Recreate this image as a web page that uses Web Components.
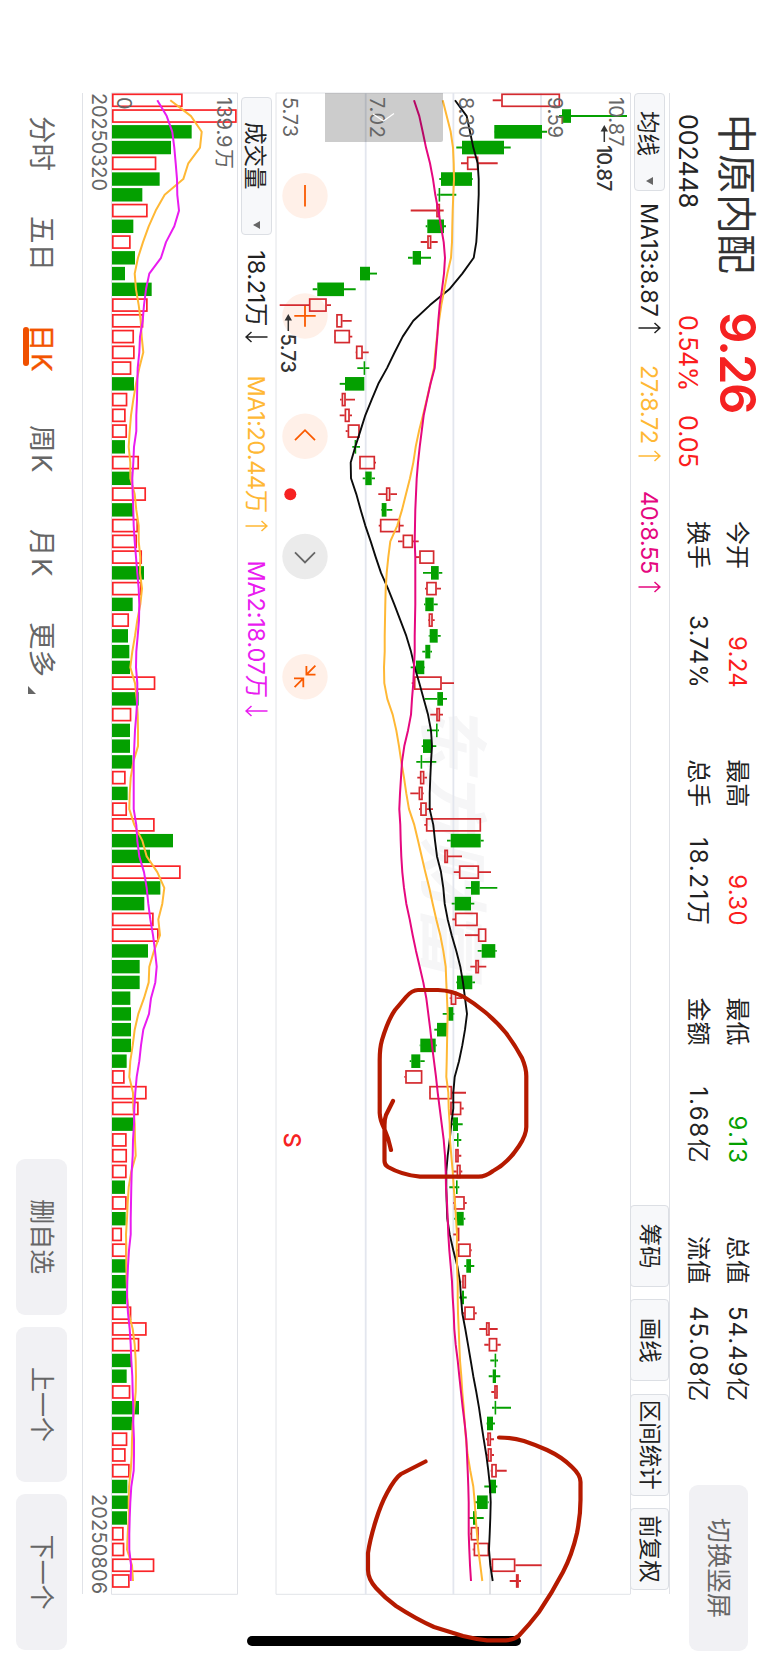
<!DOCTYPE html>
<html lang="zh-CN">
<head>
<meta charset="UTF-8">
<title>中原内配 002448</title>
<style>
    html, body { margin: 0; padding: 0; background: #fff; }
    body { width: 768px; height: 1663px; overflow: hidden; position: relative; }
</style>
</head>
<body>
<kline-screen></kline-screen>
<ink-marks></ink-marks>

<script>
const SCREEN_H = 768;
const FIRST_X = 100.3;
const STEP = 15.752;
const RED = "#d42a2f";
const GREEN = "#04a000";

// color, low, body start, body end, high (levels in px above the screen's lower edge)
const CANDLES = `
r 492.7 501.3 560 560|g 559 562 571 627|g 494 494.3 542 547|g 456.3 462 504 510.7|r 461 467 478.3 497.7
g 439.3 441 472 472.7|g 437.3 438.6 440.2 456.3|r 410.7 436.3 440 443.7|g 425.7 427.3 444 446|r 420.7 427.3 431.3 437.7
g 408 412.7 421 431|g 360 360 370 377|g 312.7 317.3 344 355.7|r 279.7 309 326.7 331|r 336 336.3 342.3 351.7
r 334 334.3 350 352.3|r 355.7 356 362.7 368.7|g 357.3 363.6 365.2 369.3|g 339.7 345 364.3 364.3|r 340 341.7 345.7 355
r 339.7 344.7 349.7 352|r 345.7 347.7 359.7 359.7|g 352.3 354.6 356.2 360|r 359 359.3 375 376|g 362.7 365.3 371.7 375
r 378.3 386 390.3 397|g 381 381.7 386.5 392.3|r 378.7 380 400 403.7|r 398 402.7 413 418.7|r 415.7 419.3 434.3 434.3
g 423 431 438.7 442.3|r 425 426.3 436.7 441|g 424 425.3 433.7 437.7|r 428 428.7 432.7 434.7|g 428.7 429.7 437.7 440.7
g 422.3 425.3 430.3 432|g 410.7 416 424.3 425|r 411.7 414 441.7 454|g 424.7 437.3 443 447|r 430.3 436.3 440 443
g 427 436 437.6 439|g 421.7 423 431.7 436.3|g 416.3 420.6 422.2 436.3|r 417.3 420 424.3 427|r 410.3 418.7 422.7 423.7
r 419 420.3 426.7 433|r 424.3 426 481 481|g 447 450.7 480.7 483.7|r 444 444.3 448 462|r 453.7 459 479 491
g 465.7 471 479.7 497.3|g 451.7 454.7 471 474.3|r 452.3 455 477.7 477.7|r 465 478 486.3 486.3|g 477.7 481.7 495.3 496.7
r 470.3 475.3 479 486.3|g 456.3 457 472.3 475|r 449.7 450.7 456.3 462.3|g 442.7 448.3 453.3 454.3|g 434.3 437 447 447
g 419.7 420.3 435.7 436.7|g 409.7 411.3 420.3 424.7|r 404.3 405.3 422.3 422.3|r 429 429.3 452 466|r 450 450.3 461.3 463.7
g 451 453 458 462.7|g 454 457 458.6 461.3|r 455 455.3 458.7 461.3|r 452.3 456.7 460.7 462.3|g 449.3 456 457.6 459.3
r 453.3 454 464.7 466.7|g 454.3 456.3 463.7 465.3|r 453.3 456.3 459.3 459.3|r 456 458 470.7 471.7|g 464.3 466.3 471 474.3
r 461.7 462.3 466 466|g 459.3 462 464 466.7|r 463 464.3 474.7 476.7|r 479.3 486 489.7 497.7|r 484.3 488.7 497.3 500.7
g 490.3 494.6 496.2 498|g 488.7 492.7 496 500.3|r 491.3 494.3 497.7 498|g 492 494.6 496.2 511|g 486.6 487 493 495
r 486 487.3 491 494|r 487 487.7 491.7 494|r 490.7 491.3 496.7 506.7|g 484.3 489 496 497.3|g 474.7 477 487.7 488.7
g 468.3 473 476.3 483.7|r 470 470.7 478.7 479|r 472.7 473.7 489 489|r 491.7 491.7 515.3 541.7|r 509.7 516 518.7 521`
    .trim().split(/[|\n]/).map(row => {
        const [color, ...levels] = row.split(" ");
        return { color, levels: levels.map(Number) };
    });

const MA13 = [455,466.7,470,473.3,477.7,478.7,478.7,478,477.3,476.3,473.7,462.3,449.3,430,413.3,402.7,394.7,387,378.3,371.7,365.3,360.3,355.3,350.7,351,356.3,360.7,365.3,370.7,375.7,381,388,394.3,400.3,406.3,411,414.7,419.3,423.7,428,431,432,431,430.3,429.7,429.7,433.3,435,437,441,443.3,444.7,447.7,451.7,456.3,460.3,463,465,467,465,462.3,459,454.7,453.3,453.3,451.3,449.7,447.7,446.3,446.3,446.7,447.3,449.7,453.3,457.3,460,461,462.3,465.3,468,470.7,473.3,476.3,479,481.3,483.7,486.3,488.3,490,490.7,490.3,489.7,489,490.3,492.7];
const MA27 = [442.7,446.7,450.7,453,453.7,454,453.3,452.7,452.3,452,451,447.3,444.3,441.3,439,437,435.3,434,430.3,426.7,423,419,415.7,413.3,410,406,402,397.3,390.3,388.3,386.7,385.7,385.3,385,384.7,384.7,384,384.3,387.3,392.7,396.3,399,401.3,404,406.3,409,414.3,418,421.7,425.3,429.3,432.7,436.3,440.3,443.3,445.7,446.3,447,447.7,447.3,447,446.7,446.3,448.3,448.7,449.7,450,451.3,452.7,453.7,455,456,457,456.7,457,457.7,457.7,458,458.7,459.3,460,461.3,462.3,463.7,464.7,466,467.7,470.3,473.3,474.7,475.7,477,478.3,480.3,482.3];
const MA40 = [414,419.3,422.7,426,430,433,435.3,438.3,441,443.7,445,444,442,439.7,438.3,437.3,436,434.7,430.5,427,423.7,421.7,419.7,418,416.7,416,415.3,415,414.7,415.3,415.3,415.3,415.3,415,414.7,414.7,414,413.3,412,411,408,404.3,402,401,400,399.3,400.3,400.7,401.3,402.3,404,406.3,409.7,412.7,416,419.7,423.3,426.3,428.3,430.3,432,434,436,437.7,439.7,441.7,443.7,445,445.7,446,447,447.7,448.3,449.3,450.7,452,452.7,453.7,454.3,455.7,457.7,459.3,461,462.7,464.7,466.3,467,467.7,468.3,468.7,468.7,468.7,469.3,470,471];

// Volume levels are kept at three units per px
const VOLUME = [548,710,575,513,469,479,427,443,400,392,405,375,455,443,430,402,404,394,402,382,377,381,375,417,394,438,402,414,411,426,432,425,398,387,384,388,390,466,416,394,390,390,397,377,383,381,464,519,450,542,481,433,461,476,444,419,419,391,393,393,393,380,374,440,416,400,380,381,380,375,380,377,366,381,379,380,378,394,440,418,394,380,391,417,398,382,377,389,382,384,381,371,373,463,389];
const VOLUME_COLORS = "rrggrggrgrgggrrrrrgrrrgrgrgrrrgrgrgggrgrgggrgrrggrggrrgggggggg" + "rrrgrrrgrgrrgggrrrggrggrrrgggrrrr";
const VOL_MA1 = [511,573,605,600,565,550,494,467,446,429,414,404,408,416,422,425,430,418,408,400,393,389,386,391,391,404,409,416,416,421,420,426,421,412,405,397,391,405,410,413,414,414,400,392,389,388,403,427,440,472,493,487,475,480,462,448,446,432,415,404,398,391,388,399,400,404,405,407,394,386,383,381,378,379,379,380,382,386,398,404,407,408,407,403,398,396,395,392,387,386,386,383,381,396,399];
const VOL_MA2 = [472,500,517,523,527,531,532,537,523,498,483,448,438,432,428,420,418,413,412,411,409,409,402,400,397,398,400,401,404,408,412,416,418,417,413,409,408,412,412,409,405,403,401,401,401,401,409,412,418,432,440,445,451,459,465,470,466,453,447,430,423,418,410,406,403,402,399,398,395,394,393,392,392,387,384,382,381,384,389,392,394,397,398,400,400,402,402,401,394,391,389,388,388,393,392];

const xAt = i => FIRST_X + STEP * i;
const polyline = (values, color, width, scale = 1) =>
    `<polyline fill="none" stroke="${color}" stroke-width="${width}" stroke-linejoin="round" points="${values.map((v, i) => `${xAt(i).toFixed(1)},${(SCREEN_H - v / scale).toFixed(1)}`).join(" ")}"/>`;

// Text that spreads its letters to fill a given width
class FitText extends HTMLElement {
    constructor() {
        super();
        this.attachShadow({ mode: "open" });
        this.shadowRoot.innerHTML = `
            <style>
                :host { display: inline-block; white-space: nowrap; line-height: 1.2; }
                span { display: inline-block; }
            </style>
            <span><slot></slot></span>
        `;
    }

    connectedCallback() {
        const width = Number(this.getAttribute("w"));
        if (!width) return;
        const span = this.shadowRoot.querySelector("span");
        const count = [...this.textContent].length;
        const gap = (width - span.offsetWidth) / count;
        span.style.letterSpacing = gap.toFixed(2) + "px";
        this.style.width = width + "px";
    }
}

// Thin trend arrow after an indicator value
class TrendArrow extends HTMLElement {
    constructor() {
        super();
        this.attachShadow({ mode: "open" });
        this.shadowRoot.innerHTML = `
            <style>
                :host { display: inline-block; width: 12px; height: 23px; }
                :host([down]) { transform: rotate(180deg); }
                svg { display: block; }
            </style>
            <svg width="12" height="23" fill="none" stroke="currentColor" stroke-width="1.5">
                <path d="M6 22.5V1M1 6.5L6 1L11 6.5"/>
            </svg>
        `;
    }
}

class DropButton extends HTMLElement {
    constructor() {
        super();
        this.attachShadow({ mode: "open" });
        this.shadowRoot.innerHTML = `
            <style>
                :host {
                    display: flex;
                    align-items: center;
                    justify-content: space-between;
                    box-sizing: border-box;
                    height: 31px;
                    border: 1px solid #dcdfe4;
                    border-radius: 4px;
                    background: #f7f8fa;
                    color: #222;
                    font-size: 22.5px;
                    line-height: 27px;
                }
                span { padding-top: 2px; }
                i {
                    border: 4.2px solid transparent;
                    border-top: 7.5px solid #666;
                    border-bottom: 0;
                }
            </style>
            <span><slot></slot></span><i></i>
        `;
    }
}

class ToolButton extends HTMLElement {
    constructor() {
        super();
        this.attachShadow({ mode: "open" });
        this.shadowRoot.innerHTML = `
            <style>
                :host {
                    display: flex;
                    align-items: center;
                    justify-content: center;
                    box-sizing: border-box;
                    height: 39px;
                    border: 1px solid #dcdfe4;
                    border-radius: 4px;
                    background: #f7f8fa;
                    color: #222;
                    font-size: 22.5px;
                    line-height: 1;
                }
            </style>
            <slot></slot>
        `;
    }
}

class GrayButton extends HTMLElement {
    constructor() {
        super();
        this.attachShadow({ mode: "open" });
        this.shadowRoot.innerHTML = `
            <style>
                :host {
                    display: flex;
                    align-items: center;
                    justify-content: center;
                    border-radius: 9px;
                    background: #f1f1f4;
                    color: #666;
                    font-size: 25px;
                    line-height: 1;
                }
            </style>
            <slot></slot>
        `;
    }
}

class QuoteItem extends HTMLElement {
    constructor() {
        super();
        this.attachShadow({ mode: "open" });
        this.shadowRoot.innerHTML = `
            <style>
                :host {
                    display: flex;
                    justify-content: space-between;
                    align-items: center;
                    height: 39px;
                    font-size: 24px;
                    line-height: 39px;
                    color: #222;
                    white-space: nowrap;
                }
                :host([tone="up"]) .value { color: #fb1d1d; }
                :host([tone="down"]) .value { color: #04a000; }
                .value { display: flex; padding-top: 2px; }
            </style>
            <span id="label"></span><span class="value"><slot></slot></span>
        `;
    }

    connectedCallback() {
        this.shadowRoot.querySelector("#label").textContent = this.getAttribute("label");
    }
}

class QuoteHeader extends HTMLElement {
    constructor() {
        super();
        this.attachShadow({ mode: "open" });
        this.shadowRoot.innerHTML = `
            <style>
                :host { display: flex; height: 98px; padding-left: 114px; box-sizing: border-box; }
                .main { width: 407px; flex: none; }
                .row { display: flex; align-items: center; }
                .top { height: 62px; }
                .sub { height: 35px; font-size: 25px; color: #222; }
                .name { font-size: 40px; color: #333; width: 198px; line-height: 1; padding-top: 1px; }
                .price { font-size: 49px; font-weight: 600; color: #f52222; }
                .red { color: #fb1d1d; }
                .quotes {
                    display: grid;
                    grid-template-columns: repeat(4, 167px);
                    column-gap: 71.3px;
                    grid-template-rows: 39px 39px;
                    padding-top: 11px;
                }
                gray-button { margin: 20px 0 0 82px; width: 166px; height: 59px; }
            </style>
            <div class="main">
                <div class="row top">
                    <span class="name">中原内配</span>
                    <fit-text class="price" w="100">9.26</fit-text>
                </div>
                <div class="row sub">
                    <fit-text w="94">002448</fit-text>
                    <fit-text class="red" w="76" style="margin-left:107px">0.54%</fit-text>
                    <fit-text class="red" w="53" style="margin-left:24px">0.05</fit-text>
                </div>
            </div>
            <div class="quotes">
                <quote-item label="今开" tone="up"><fit-text w="52">9.24</fit-text></quote-item>
                <quote-item label="最高" tone="up"><fit-text w="52">9.30</fit-text></quote-item>
                <quote-item label="最低" tone="down"><fit-text w="49">9.13</fit-text></quote-item>
                <quote-item label="总值"><fit-text w="97">54.49亿</fit-text></quote-item>
                <quote-item label="换手"><fit-text w="73">3.74%</fit-text></quote-item>
                <quote-item label="总手"><fit-text w="89">18.21万</fit-text></quote-item>
                <quote-item label="金额"><fit-text w="78">1.68亿</fit-text></quote-item>
                <quote-item label="流值"><fit-text w="97">45.08亿</fit-text></quote-item>
            </div>
            <gray-button>切换竖屏</gray-button>
        `;
    }
}

class PriceChart extends HTMLElement {
    constructor() {
        super();
        this.attachShadow({ mode: "open" });
        this.shadowRoot.innerHTML = `
            <style>
                :host { display: block; position: relative; height: 354px; }
                svg { display: block; overflow: visible; }
                text { font-size: 20px; fill: #666; }
                .tag { fill: #333; font-weight: 500; }
                .wm { font-size: 70px; font-weight: 700; font-style: italic; fill: #f6f6f7; }
            </style>
            <svg width="1502" height="354" viewBox="93 138 1502 354"></svg>
        `;
    }

    connectedCallback() {
        this.shadowRoot.querySelector("svg").innerHTML =
            this.drawGrid() + this.drawCircles() + this.drawCandles() +
            polyline(MA13, "#0c0c0c", 1.9) + polyline(MA27, "#ffb835", 2) + polyline(MA40, "#e5087f", 2) +
            this.drawLabels();
    }

    drawGrid() {
        const lines = [541, 453.4, 365.7].map(v => `<path d="M93 ${SCREEN_H - v}H1594.3" stroke="#e3e6ee" stroke-width="1.8"/>`).join("");
        return `
            <text class="wm" x="700" y="341" textLength="276">东方财富</text>
            <path d="M93 137.6V492H1594.3V137.6" fill="none" stroke="#e2e4e8"/>
            ${lines}
            <path d="M1560 278H1594.3" stroke="#cfd1d6" stroke-width="1.3"/>`;
    }

    // Round zoom / scroll controls
    drawCircles() {
        const icons = [
            "M-10.7 0H10.7",
            "M-10.7 0H10.7M0 -10.7V10.7",
            "M4 -10L-6 0L4 10",
            "M-4 -10L6 0L-4 10",
            "M-2 -10.5V-1.4H-10.7M-2 -1.4L-11 -10.4M1.7 11V1.7H10.5M1.7 1.7L10.4 10.4"
        ];
        return icons.map((d, i) => {
            const gray = i === 3;
            return `<g transform="translate(${195.7 + 120.25 * i} 463)">
                <circle r="22.7" fill="${gray ? "#ebebeb" : "#fff0e8"}"/>
                <path d="${d}" fill="none" stroke="${gray ? "#666" : "#fa5a00"}" stroke-width="1.8"/>
            </g>`;
        }).join("");
    }

    drawCandles() {
        return CANDLES.map(({ color, levels }, i) => {
            const [low, from, to, high] = levels.map(v => SCREEN_H - v);
            const x = xAt(i);
            const stroke = color === "r" ? RED : GREEN;
            const body = color === "r"
                ? `<rect x="${x - 6}" y="${to + .7}" width="12" height="${Math.max(from - to - 1.4, 1)}" fill="none" stroke="${RED}" stroke-width="1.7"/>`
                : `<rect x="${x - 6.8}" y="${to}" width="13.6" height="${from - to}" fill="${GREEN}"/>`;
            return `<path d="M${x} ${low}V${from}M${x} ${to}V${high}" stroke="${stroke}" stroke-width="1.9"/>${body}`;
        }).join("");
    }

    drawLabels() {
        return `
            <path d="M93 325H140Q142 325 142 327V443H93Z" fill="#000" fill-opacity=".2"/>
            <text x="97" y="159.5" textLength="49.5">10.87</text>
            <text x="97" y="220" textLength="41">9.59</text>
            <text x="97" y="309.2" textLength="41">8.30</text>
            <text x="97" y="398.2" textLength="41">7.02</text>
            <text x="97" y="485" textLength="40">5.73</text>
            <path d="M114 395L121 384.5L113.5 374" fill="none" stroke="#fff" stroke-width="1.3"/>
            <g stroke="#333" stroke-width="1.5">
                <path d="M130 163.7H142"/><path d="M319 479.7H331"/>
            </g>
            <path d="M125 163.7L131.5 160V167.4ZM314 479.7L320.5 476V483.4Z" fill="#333"/>
            <text class="tag" x="145" y="171.2" textLength="46.5">10.87</text>
            <text class="tag" x="333.5" y="487.2" textLength="39.5">5.73</text>
            <circle cx="494.3" cy="477.7" r="6" fill="#f62222"/>
            <text x="1132.5" y="484" style="font-size:23.5px;font-weight:500;fill:#f62222">S</text>`;
    }
}

class VolumeChart extends HTMLElement {
    constructor() {
        super();
        this.attachShadow({ mode: "open" });
        this.shadowRoot.innerHTML = `
            <style>
                :host { display: block; height: 126px; }
                svg { display: block; overflow: visible; }
                text { font-size: 20px; fill: #666; }
            </style>
            <svg width="1502" height="126" viewBox="93 531 1502 126"></svg>
        `;
    }

    connectedCallback() {
        const bars = VOLUME.map((v, i) => {
            const top = SCREEN_H - v / 3;
            const x = xAt(i);
            return VOLUME_COLORS[i] === "r"
                ? `<rect x="${x - 6}" y="${top + .8}" width="12" height="${655.2 - top - .8}" fill="none" stroke="#fa2428" stroke-width="1.7"/>`
                : `<rect x="${x - 6.7}" y="${top}" width="13.4" height="${656 - top}" fill="${GREEN}"/>`;
        }).join("");

        this.shadowRoot.querySelector("svg").innerHTML = `
            <path d="M93 530.5V656.5H1594.3V530.5Z" fill="none" stroke="#dfe1e6"/>
            ${bars}
            ${polyline(VOL_MA1, "#ffb835", 2, 3)}
            ${polyline(VOL_MA2, "#e91cf0", 2, 3)}
            <text x="97" y="551">139.9 <tspan x="149">万</tspan></text>
            <text x="97" y="651.5">0</text>`;
    }
}

class PeriodTabs extends HTMLElement {
    constructor() {
        super();
        this.attachShadow({ mode: "open" });
        this.shadowRoot.innerHTML = `
            <style>
                :host {
                    display: flex;
                    align-items: center;
                    box-sizing: border-box;
                    height: 82px;
                    padding: 0 13px 1px 116px;
                    font-size: 27.5px;
                    line-height: 1;
                    color: #666;
                }
                span { white-space: nowrap; flex: none; }
                b { font-weight: 400; margin-left: 1.5px; }
                .active { color: #f35400; position: relative; -webkit-text-stroke: .4px #f35400; }
                .active::after {
                    content: "";
                    position: absolute;
                    left: 3px;
                    top: 30px;
                    width: 39px;
                    height: 6px;
                    border-radius: 3px;
                    background: #f05000;
                }
                .more { display: flex; align-items: flex-end; gap: 9px; margin-right: auto; }
                .more i { border-left: 8px solid transparent; border-bottom: 8px solid #666; }
                .buttons { display: flex; gap: 12px; }
                gray-button { width: 155.7px; height: 51px; }
            </style>
            <span style="width:100px">分时</span>
            <span style="width:108px">五日</span>
            <span style="width:101px"><span class="active">日<b>K</b></span></span>
            <span style="width:104px">周<b>K</b></span>
            <span style="width:93px">月<b>K</b></span>
            <span class="more">更多<i></i></span>
            <div class="buttons">
                <gray-button>删自选</gray-button>
                <gray-button>上一个</gray-button>
                <gray-button>下一个</gray-button>
            </div>
        `;
    }
}

// Landscape stage turned a quarter clockwise inside the portrait screen
class KlineScreen extends HTMLElement {
    constructor() {
        super();
        this.attachShadow({ mode: "open" });
        this.shadowRoot.innerHTML = `
            <style>
                :host {
                    display: block;
                    width: 768px;
                    height: 1663px;
                    overflow: hidden;
                    contain: strict;
                }
                .stage {
                    display: flex;
                    flex-direction: column;
                    position: relative;
                    width: 1663px;
                    height: 768px;
                    transform-origin: 0 0;
                    transform: translateX(768px) rotate(90deg);
                    background: #fff;
                    font-family: Inter, "Noto Sans CJK SC", sans-serif;
                    color: #222;
                }
                .panel { margin-left: 93px; width: 1501px; }
                .bar { display: flex; align-items: center; box-sizing: border-box; font-size: 23.5px; }
                .bar > fit-text { padding-top: 2px; }
                .ma { height: 40px; border-top: 1px solid #e0e2e7; border-bottom: 1px solid #e0e2e7; flex: none; }
                .vol { height: 39px; flex: none; }
                .tools { display: flex; margin-left: auto; margin-right: 4px; gap: 12.5px; }
                .dates {
                    display: flex;
                    justify-content: space-between;
                    box-sizing: border-box;
                    height: 29px;
                    border-bottom: 1px solid #e0e2e7;
                    font-size: 20px;
                    line-height: 1.2;
                    color: #666;
                }
                trend-arrow { margin-left: 7px; }
                .yellow { color: #ffb835; }
                .pink { color: #e5087f; }
                .magenta { color: #e91cf0; }
                .home {
                    position: absolute;
                    left: 1636px;
                    top: 247px;
                    width: 10px;
                    height: 274px;
                    border-radius: 5px;
                    background: #000;
                }
            </style>
            <div class="stage">
                <quote-header></quote-header>
                <div class="panel bar ma">
                    <drop-button style="width:98px;padding:0 5px 0 17px">均线</drop-button>
                    <fit-text w="114" style="margin-left:12px">MA13:8.87</fit-text>
                    <trend-arrow style="margin-left:5px"></trend-arrow>
                    <fit-text class="yellow" w="79" style="margin-left:31px">27:8.72</fit-text>
                    <trend-arrow class="yellow" style="margin-left:6px"></trend-arrow>
                    <fit-text class="pink" w="83" style="margin-left:29px">40:8.55</fit-text>
                    <trend-arrow class="pink"></trend-arrow>
                    <div class="tools">
                        <tool-button style="width:81.7px">筹码</tool-button>
                        <tool-button style="width:82px">画线</tool-button>
                        <tool-button style="width:101.7px">区间统计</tool-button>
                        <tool-button style="width:82px">前复权</tool-button>
                    </div>
                </div>
                <price-chart class="panel"></price-chart>
                <div class="panel bar vol">
                    <drop-button style="width:137.5px;margin-left:4px;padding:0 5px 0 24px">成交量</drop-button>
                    <fit-text w="76" style="margin-left:16px">18.21万</fit-text>
                    <trend-arrow down style="margin-left:4px"></trend-arrow>
                    <fit-text class="yellow" w="137" style="margin-left:33px">MA1:20.44万</fit-text>
                    <trend-arrow class="yellow" style="margin-left:7px"></trend-arrow>
                    <fit-text class="magenta" w="137" style="margin-left:29px">MA2:18.07万</fit-text>
                    <trend-arrow down class="magenta"></trend-arrow>
                </div>
                <volume-chart class="panel"></volume-chart>
                <div class="panel dates">
                    <fit-text w="98">20250320</fit-text>
                    <fit-text w="100">20250806</fit-text>
                </div>
                <period-tabs></period-tabs>
                <div class="home"></div>
            </div>
        `;
    }
}

// Freehand red circles over the chart
class InkMarks extends HTMLElement {
    constructor() {
        super();
        this.attachShadow({ mode: "open" });
        this.shadowRoot.innerHTML = `
            <style>
                :host { position: absolute; left: 0; top: 0; pointer-events: none; }
                svg { display: block; }
            </style>
            <svg width="768" height="1663" fill="none" stroke="#b51a00" stroke-width="4.2" stroke-linecap="round" stroke-linejoin="round">
                <path d="M393 1101L386 1115Q384.5 1119 384.5 1125V1161Q384.5 1165 388 1167Q402 1175 420 1176.7H478Q485 1177 493 1171Q508 1163 519 1146Q526.3 1135 526.3 1127V1076Q526.3 1068 522 1058Q515 1045 506 1033Q497 1022 485 1012Q474 1003 464 997Q452 990.5 438 990H418Q412 990 406 997L395 1010Q388 1020 382 1040Q379.7 1048 379.7 1060V1113Q380 1120 384 1128Q389 1139 391 1150"/>
                <path d="M499 1437.5Q513 1437.5 524 1441Q536 1445 547 1450Q562 1457 572 1467Q580.5 1475 580.5 1482V1500Q580.5 1515 577 1533Q572 1555 563 1572Q552 1593 539 1612Q529 1625 519 1635.5Q514 1640 506 1640.3H487Q475 1639 463 1636L434 1627Q416 1619 396 1606Q385 1598 376 1588Q368 1579 368 1570V1553Q370 1539 376 1520Q381 1504 387 1493Q395 1478 401 1474L425.5 1461.5"/>
            </svg>
        `;
    }
}

customElements.define("fit-text", FitText);
customElements.define("trend-arrow", TrendArrow);
customElements.define("drop-button", DropButton);
customElements.define("tool-button", ToolButton);
customElements.define("gray-button", GrayButton);
customElements.define("quote-item", QuoteItem);
customElements.define("quote-header", QuoteHeader);
customElements.define("price-chart", PriceChart);
customElements.define("volume-chart", VolumeChart);
customElements.define("period-tabs", PeriodTabs);
customElements.define("kline-screen", KlineScreen);
customElements.define("ink-marks", InkMarks);
</script>
</body>
</html>
